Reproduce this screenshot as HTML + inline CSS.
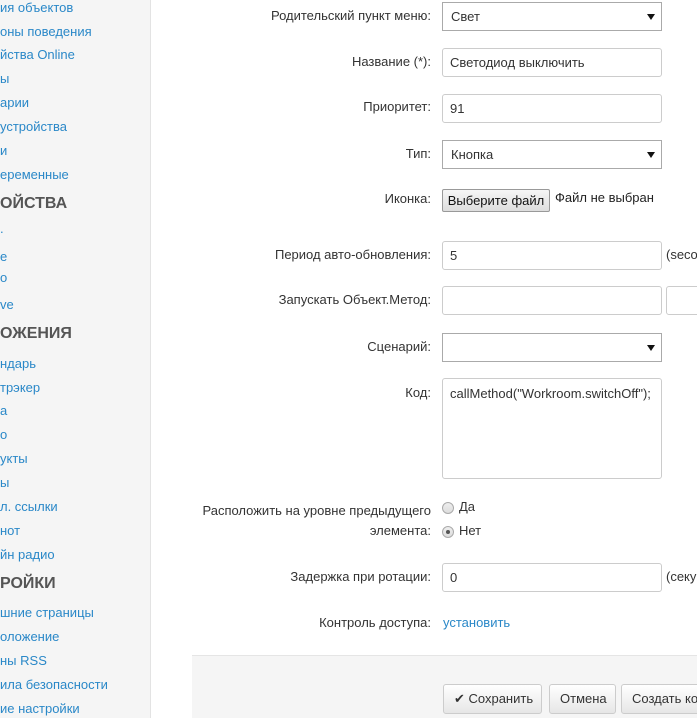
<!DOCTYPE html>
<html><head><meta charset="utf-8"><style>
*{box-sizing:border-box}
body{margin:0;width:697px;height:718px;overflow:hidden;background:#fff;font-family:"Liberation Sans",Arial,sans-serif;font-size:13px;color:#333;position:relative}
.sb{position:absolute;left:0;top:0;width:151px;height:718px;background:#f5f5f5;border-right:1px solid #e3e3e3}
.sb div{position:absolute;left:0;white-space:nowrap;color:#2a88c8;font-size:13px;line-height:16px}
.sb div.h{color:#555;font-weight:bold;font-size:16px;line-height:18px}
.a{position:absolute}
.lb{position:absolute;right:266px;white-space:nowrap;line-height:16px;text-align:right}
.in{position:absolute;left:442px;width:220px;height:29px;border:1px solid #ccc;border-radius:3px;padding:0 7px;line-height:27px;background:#fff}
.sel{position:absolute;left:442px;width:220px;height:29px;border:1px solid #aaa;padding:0 8px;line-height:27px;background:#fff}
.sel:after{content:"";position:absolute;right:6px;top:11px;border-left:4px solid transparent;border-right:4px solid transparent;border-top:6px solid #111}
.btn{position:absolute;top:684px;height:30px;border:1px solid #ccc;border-radius:3px;background:linear-gradient(#fff,#e6e6e6);line-height:28px;padding:0 10px;white-space:nowrap;color:#333}
.rd{position:absolute;left:442px;width:12px;height:12px;border:1px solid #aaa;border-radius:50%;background:linear-gradient(#eee,#ddd)}
</style></head><body>
<div class="sb">
<div style="top:0">ия объектов</div>
<div style="top:24px">оны поведения</div>
<div style="top:47px">йства Online</div>
<div style="top:71px">ы</div>
<div style="top:95px">арии</div>
<div style="top:119px">устройства</div>
<div style="top:143px">и</div>
<div style="top:167px">еременные</div>
<div class="h" style="top:195px">ОЙСТВА</div>
<div style="top:221px">.</div>
<div style="top:249px">e</div>
<div style="top:270px">o</div>
<div style="top:297px">ve</div>
<div class="h" style="top:325px">ОЖЕНИЯ</div>
<div style="top:356px">ндарь</div>
<div style="top:380px">трэкер</div>
<div style="top:403px">а</div>
<div style="top:427px">о</div>
<div style="top:451px">укты</div>
<div style="top:475px">ы</div>
<div style="top:499px">л. ссылки</div>
<div style="top:523px">нот</div>
<div style="top:547px">йн радио</div>
<div class="h" style="top:575px">РОЙКИ</div>
<div style="top:605px">шние страницы</div>
<div style="top:629px">оложение</div>
<div style="top:653px">ны RSS</div>
<div style="top:677px">ила безопасности</div>
<div style="top:701px">ие настройки</div>
</div>

<div class="lb" style="top:8px">Родительский пункт меню:</div>
<div class="sel" style="top:2px">Свет</div>
<div class="lb" style="top:54px">Название (*):</div>
<div class="in" style="top:48px">Светодиод выключить</div>
<div class="lb" style="top:99px">Приоритет:</div>
<div class="in" style="top:94px">91</div>
<div class="lb" style="top:146px">Тип:</div>
<div class="sel" style="top:140px">Кнопка</div>
<div class="lb" style="top:191px">Иконка:</div>
<div class="a" style="left:442px;top:189px;width:108px;height:23px;border:1px solid #999;border-radius:2px;background:linear-gradient(#f6f6f6,#ddd);text-align:center;line-height:21px;color:#111">Выберите файл</div>
<div class="a" style="left:555px;top:190px;color:#222">Файл не выбран</div>
<div class="lb" style="top:247px">Период авто-обновления:</div>
<div class="in" style="top:241px">5</div>
<div class="a" style="left:666px;top:247px">(seco</div>
<div class="lb" style="top:292px">Запускать Объект.Метод:</div>
<div class="in" style="top:286px"></div>
<div class="in" style="top:286px;left:666px;width:40px"></div>
<div class="lb" style="top:339px">Сценарий:</div>
<div class="sel" style="top:333px"></div>
<div class="lb" style="top:385px">Код:</div>
<div class="in" style="top:378px;height:101px;line-height:16px;padding-top:7px">callMethod("Workroom.switchOff");</div>
<div class="lb" style="top:503px">Расположить на уровне предыдущего</div>
<div class="lb" style="top:523px">элемента:</div>
<div class="rd" style="top:502px"></div><div class="a" style="left:459px;top:499px">Да</div>
<div class="rd" style="top:526px"><div style="position:absolute;left:3px;top:3px;width:4px;height:4px;border-radius:50%;background:#555"></div></div><div class="a" style="left:459px;top:523px">Нет</div>
<div class="lb" style="top:569px">Задержка при ротации:</div>
<div class="in" style="top:563px">0</div>
<div class="a" style="left:666px;top:569px">(секу</div>
<div class="lb" style="top:615px">Контроль доступа:</div>
<div class="a" style="left:443px;top:615px;color:#2a88c8">установить</div>
<div class="a" style="left:192px;top:655px;width:505px;height:63px;background:#f5f5f5;border-top:1px solid #e5e5e5"></div>
<div class="btn" style="left:443px;width:99px">✔ Сохранить</div>
<div class="btn" style="left:549px;width:67px">Отмена</div>
<div class="btn" style="left:621px;width:100px">Создать ко</div>
</body></html>
